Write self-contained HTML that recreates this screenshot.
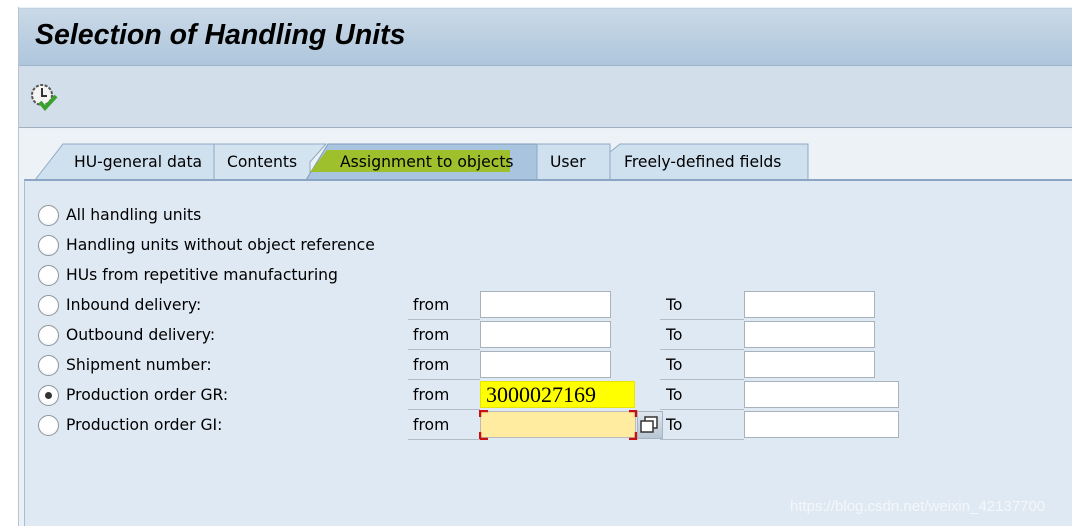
<!DOCTYPE html>
<html><head><meta charset="utf-8"><style>
*{margin:0;padding:0;box-sizing:border-box}
body{width:1072px;height:526px;overflow:hidden;background:#fff;font-family:"DejaVu Sans","Liberation Sans",sans-serif;position:relative}
.a{position:absolute}
.t{font-size:15.6px;color:#000;white-space:nowrap}
.in{position:absolute;background:#fff;border:1px solid #a9b3bd;height:27px}
.ul{position:absolute;height:1px;background:#b4bcc6}
.rb{position:absolute;width:21px;height:21px;border-radius:50%;border:1px solid #8d959c;background:radial-gradient(circle at 50% 40%,#fff 55%,#e2e6ea)}
</style></head><body>
<div class="a" style="left:18px;top:7px;width:1054px;height:519px;background:#e9f0f6;border-left:1px solid #b8c4d0"></div>
<div class="a" style="left:19px;top:8px;width:1053px;height:58px;background:linear-gradient(#cad9e7,#aec6dc);border-top:1px solid #c4d2e0;border-bottom:1px solid #9fb4c8"></div>
<div class="a" style="left:35px;top:19px;font:italic bold 28.5px 'Liberation Sans',sans-serif;color:#000">Selection of Handling Units</div>
<div class="a" style="left:19px;top:66px;width:1053px;height:62px;background:#d2dfea;border-bottom:1px solid #9fb0c0"></div>
<svg class="a" style="left:30px;top:83px" width="32" height="32" viewBox="0 0 32 32">
<circle cx="12" cy="12" r="10" fill="#f4f4f4" stroke="#555" stroke-width="2" stroke-dasharray="3 1.5"/>
<path d="M12 5v8h5" stroke="#333" stroke-width="2" fill="none"/>
<path d="M10 19l5 6 11-12" stroke="#3ca02c" stroke-width="4" fill="none"/>
</svg>
<div class="a" style="left:19px;top:129px;width:1053px;height:51px;background:#edf2f7"></div>
<svg class="a" style="left:30px;top:142px" width="790" height="40">
<path d="M5 38L33 2H184V38Z" fill="#cfe0ef" stroke="#8fa9c4"/>
<path d="M184 38V2H296L280 20V38Z" fill="#d4e3f0" stroke="#8fa9c4"/>
<path d="M276 38L298 2H507V38Z" fill="#a9c4df" stroke="#7f9bb9"/>
<path d="M507 38V2H580V38Z" fill="#cfe0ef" stroke="#8fa9c4"/>
<path d="M580 38V10L590 2H778V38Z" fill="#cfe0ef" stroke="#8fa9c4"/>
<path d="M297 8H480V30H280Z" fill="#9cbf0e" opacity=".85"/>
</svg>
<div class="a t" style="left:74px;top:153px">HU-general data</div>
<div class="a t" style="left:227px;top:153px">Contents</div>
<div class="a t" style="left:340px;top:153px">Assignment to objects</div>
<div class="a t" style="left:550px;top:153px">User</div>
<div class="a t" style="left:624px;top:153px">Freely-defined fields</div>
<div class="a" style="left:24px;top:179px;width:1048px;height:347px;background:#dfe9f3;border-top:2px solid #8aa6c4;border-left:1px solid #a9bdd1"></div>
<div class="rb" style="left:38px;top:205px"></div><div class="a t" style="left:66px;top:206px">All handling units</div>
<div class="rb" style="left:38px;top:235px"></div><div class="a t" style="left:66px;top:236px">Handling units without object reference</div>
<div class="rb" style="left:38px;top:265px"></div><div class="a t" style="left:66px;top:266px">HUs from repetitive manufacturing</div>
<div class="rb" style="left:38px;top:295px"></div><div class="a t" style="left:66px;top:296px">Inbound delivery:</div>
<div class="rb" style="left:38px;top:325px"></div><div class="a t" style="left:66px;top:326px">Outbound delivery:</div>
<div class="rb" style="left:38px;top:355px"></div><div class="a t" style="left:66px;top:356px">Shipment number:</div>
<div class="rb" style="left:38px;top:385px"></div><div class="a" style="left:45px;top:392px;width:7px;height:7px;border-radius:50%;background:#333"></div><div class="a t" style="left:66px;top:386px">Production order GR:</div>
<div class="rb" style="left:38px;top:415px"></div><div class="a t" style="left:66px;top:416px">Production order GI:</div>

<div class="a t" style="left:413px;top:296px">from</div><div class="in" style="left:480px;top:291px;width:131px"></div><div class="a t" style="left:666px;top:296px">To</div><div class="in" style="left:744px;top:291px;width:131px"></div>
<div class="ul" style="left:408px;top:319px;width:72px"></div><div class="ul" style="left:660px;top:319px;width:84px"></div>
<div class="a t" style="left:413px;top:326px">from</div><div class="in" style="left:480px;top:321px;width:131px"></div><div class="a t" style="left:666px;top:326px">To</div><div class="in" style="left:744px;top:321px;width:131px"></div>
<div class="ul" style="left:408px;top:349px;width:72px"></div><div class="ul" style="left:660px;top:349px;width:84px"></div>
<div class="a t" style="left:413px;top:356px">from</div><div class="in" style="left:480px;top:351px;width:131px"></div><div class="a t" style="left:666px;top:356px">To</div><div class="in" style="left:744px;top:351px;width:131px"></div>
<div class="ul" style="left:408px;top:379px;width:72px"></div><div class="ul" style="left:660px;top:379px;width:84px"></div>
<div class="a t" style="left:413px;top:386px">from</div><div class="in" style="left:480px;top:381px;width:155px;background:#ffff00;border-color:#e6e600"></div><div class="a" style="left:486px;top:382px;font:22px 'Liberation Serif',serif">3000027169</div><div class="a t" style="left:666px;top:386px">To</div><div class="in" style="left:744px;top:381px;width:155px"></div>
<div class="ul" style="left:408px;top:409px;width:72px"></div><div class="ul" style="left:660px;top:409px;width:84px"></div>
<div class="a t" style="left:413px;top:416px">from</div>
<div class="in" style="left:480px;top:411px;width:156px;background:#ffeca0;border-color:#bbb"></div>
<svg class="a" style="left:479px;top:410px" width="159" height="30"><path d="M1 7V1H9M150 1H157V7M157 22V29H150M9 29H1V22" stroke="#c81010" stroke-width="2.5" fill="none"/></svg>
<div class="a" style="left:637px;top:411px;width:26px;height:28px;background:linear-gradient(#dfe6ee,#b8c6d4);border:1px solid #a5b3c2"></div>
<svg class="a" style="left:640px;top:416px" width="20" height="18"><rect x="5" y="1" width="12" height="11" fill="#fff" stroke="#333" stroke-width="1.5"/><rect x="1" y="5" width="12" height="11" fill="#fff" stroke="#333" stroke-width="1.5"/></svg>
<div class="a t" style="left:666px;top:416px">To</div><div class="in" style="left:744px;top:411px;width:155px"></div>
<div class="ul" style="left:408px;top:439px;width:72px"></div><div class="ul" style="left:660px;top:439px;width:84px"></div>
<div class="a" style="left:790px;top:498px;font:15px 'Liberation Sans',sans-serif;color:#f4f7fa">https://blog.csdn.net/weixin_42137700</div>
</body></html>
